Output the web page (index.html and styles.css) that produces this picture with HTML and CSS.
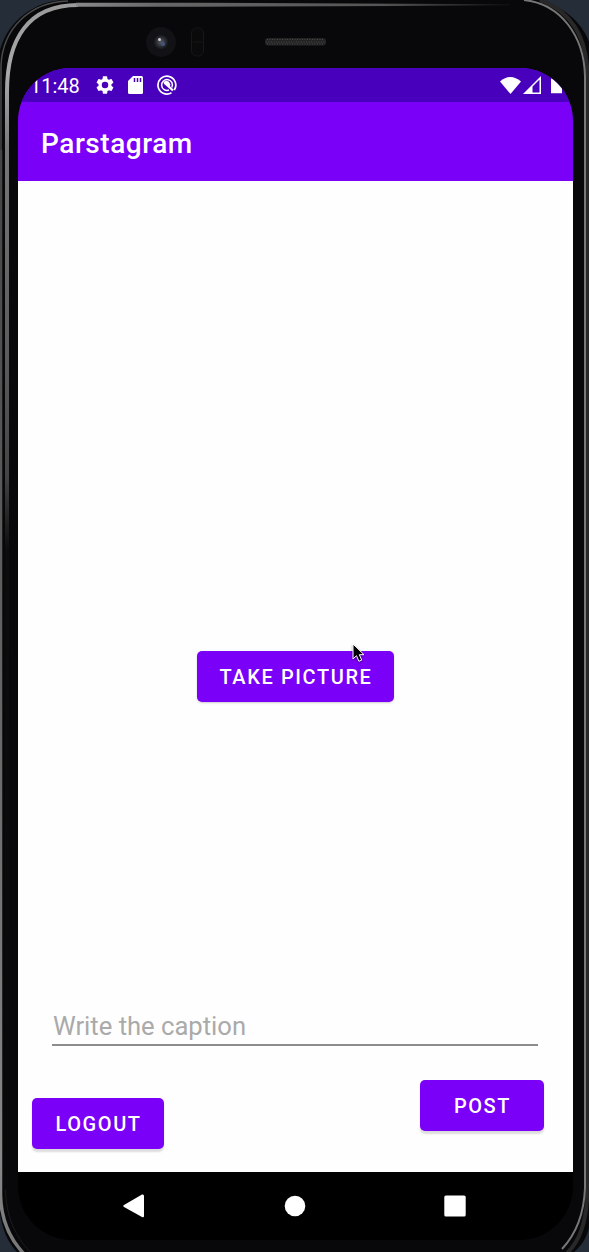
FILE: index.html
```html
<!DOCTYPE html>
<html lang="en">
<head>
<meta charset="utf-8">
<title>Parstagram</title>
<link rel="stylesheet" href="styles.css">
</head>
<body>
<div class="device">
  <svg class="frame" viewBox="0 0 589 1252" aria-hidden="true">
    <defs>
      <linearGradient id="side" x1="0" y1="0" x2="0" y2="1252" gradientUnits="userSpaceOnUse">
        <stop offset="0" stop-color="#999"/><stop offset=".06" stop-color="#aaa"/><stop offset=".12" stop-color="#777"/><stop offset=".3" stop-color="#585858"/><stop offset=".38" stop-color="#444"/><stop offset=".44" stop-color="#0c0c0c"/><stop offset="1" stop-color="#080808"/>
      </linearGradient>
      <linearGradient id="top" x1="76" y1="0" x2="510" y2="0" gradientUnits="userSpaceOnUse">
        <stop offset="0" stop-color="#888"/><stop offset=".2" stop-color="#666"/><stop offset=".7" stop-color="#555"/><stop offset="1" stop-color="#111"/>
      </linearGradient>
      <linearGradient id="edge" x1="0" y1="1252" x2="0" y2="150" gradientUnits="userSpaceOnUse">
        <stop offset="0" stop-color="#777"/><stop offset=".08" stop-color="#888"/><stop offset=".5" stop-color="#666"/><stop offset="1" stop-color="#444"/>
      </linearGradient>
      <radialGradient id="lens"><stop offset="0" stop-color="#555b68"/><stop offset=".5" stop-color="#282a30"/><stop offset=".75" stop-color="#111216"/><stop offset="1" stop-color="#121216"/></radialGradient>
    </defs>
    <path fill="#08080a" d="M0 50C8 20 36 0 66 0H538C562 5 582 22 589 42V1228C586 1240 580 1247 574 1252H17C8 1243 2 1229 0 1213Z"/>
    <path fill="none" stroke="#4a4a4a" stroke-width="1.500" d="M1 190V65C3 28 30 2 68 1"/>
    <path fill="none" stroke="url(#edge)" stroke-width="3.500" d="M.5 150V1195C1 1220 9 1238 24 1254"/>
    <path fill="none" stroke="#1c1c1c" d="M5.500 600V1190C6 1216 15 1236 30 1252"/>
    <path fill="none" stroke="url(#side)" stroke-width="4" d="M7 1190V92C7 39 28 5 78 5"/>
    <path fill="url(#top)" d="M76 2.800H200L510 4.200V5.200L400 6L200 6.800H76z"/>
    <path fill="none" stroke="#282828" stroke-width="4" d="M540 0C573 12 587 38 587.500 76V1190C587 1222 579 1242 567 1253"/>
    <path fill="none" stroke="#777" stroke-width="2" d="M524 0C561 4 584 36 585 76V1188C584 1214 577 1233 562 1249"/>
    <circle cx="161" cy="42" r="15" fill="#121216"/>
    <circle cx="161" cy="42" r="10" fill="url(#lens)"/>
    <circle cx="159.500" cy="39.500" r="1.500" fill="#ccc"/><circle cx="163" cy="44" r="2" fill="#47547c"/>
    <rect x="191.500" y="28" width="12" height="28" rx="5" fill="#0a0a0b" stroke="#171719"/><path d="M193 42h9" stroke="#171719"/>
    <rect x="265" y="38" width="61" height="7.500" rx="3" fill="#232324"/>
    <path d="M267 39.500h57M266 42h59M267 44h57" stroke="#4b4b4b" stroke-dasharray="1 1.500"/>
  </svg>
  <main class="screen">
    <header class="top">
      <div class="status">
        <span class="time">11:48</span>
        <svg class="gear" viewBox="2 2 20 20"><path fill="#fff" d="M19.140 12.940c.04-.3.060-.61.060-.94s-.02-.64-.07-.94l2.030-1.580c.18-.14.230-.41.120-.61l-1.920-3.320c-.12-.22-.37-.29-.59-.22l-2.390.96c-.5-.38-1.030-.7-1.620-.94l-.36-2.540c-.04-.24-.24-.41-.48-.41h-3.840c-.24 0-.43.170-.47.410l-.36 2.540c-.59.240-1.130.57-1.620.94l-2.390-.96c-.22-.08-.47 0-.59.220L2.740 8.870c-.12.210-.08.470.120.610l2.030 1.580c-.05.3-.09.630-.09.940s.02.640.070.940l-2.030 1.580c-.18.140-.23.410-.12.610l1.920 3.320c.12.220.37.290.59.220l2.390-.96c.5.380 1.030.7 1.620.94l.36 2.540c.05.240.24.410.48.410h3.840c.24 0 .44-.17.470-.41l.36-2.540c.59-.24 1.130-.56 1.620-.94l2.390.96c.22.080.47 0 .59-.22l1.920-3.320c.12-.22.070-.47-.12-.61zM12 15.600A3.600 3.600 0 1 1 12 8.400a3.600 3.600 0 0 1 0 7.200z"/></svg>
        <svg class="sd" viewBox="0 0 15 18"><path fill="#fff" d="M5 0h8.500Q15 0 15 1.500v15q0 1.500-1.500 1.500h-12Q0 18 0 16.500V5z"/><path stroke="#4900bd" stroke-width="1.500" d="M6.500 2v4M9.500 2v4M12.500 2v4"/></svg>
        <svg class="debug" viewBox="0 0 20 20"><g fill="none" stroke="#fff"><path stroke-width="1.700" d="M17.300 15A8.900 8.900 0 1 0 14.500 17.700"/><path stroke-width="1.500" d="M14.800 12.500A5.400 5.400 0 1 0 12 15"/><path stroke-width="2.300" d="m9 9 7 6.500"/></g><path fill="#fff" d="M6.500 7 9 5.500l3 1.300 1.500 3.200-2 2L7 9z"/></svg>
        <span class="space"></span>
        <svg class="wifi" viewBox="0 0 21 17"><path fill="#fff" d="M0 4.500Q10.500-4.500 21 4.500L10.500 17z"/></svg>
        <svg class="signal" viewBox="0 0 18 18"><path fill="#fff" fill-rule="evenodd" d="M0 18 18 0V18zM9.500 10.500V16.500H16.500V3.500z"/></svg>
        <svg class="battery" viewBox="0 0 12 18"><path fill="#fff" d="M0 2h3V0h6v2h3v16H0z"/></svg>
      </div>
      <div class="appbar"><h1>Parstagram</h1></div>
    </header>
    <section class="content">
      <button class="btn take">TAKE PICTURE</button>
      <input class="caption" placeholder="Write the caption" aria-label="Caption">
      <div class="actions"><button class="btn logout">LOGOUT</button><button class="btn post">POST</button></div>
    </section>
    <nav class="nav">
      <svg viewBox="0 0 22 24"><path fill="#fff" d="M1 11 19 .6Q21 0 21 2v20q0 2-2 1L1 13Q-.5 12 1 11z"/></svg>
      <svg viewBox="0 0 22 24"><circle cx="11" cy="12" r="10.300" fill="#fff"/></svg>
      <svg viewBox="0 0 22 24"><rect x=".3" y="1.500" width="21.400" height="21" rx="1.500" fill="#fff"/></svg>
    </nav>
  </main>
  <svg class="cursor" viewBox="0 0 14 20"><path fill="#000" stroke="#fff" stroke-width="1" d="M1 1v15l3.500-3.300 2.400 5.600 2.800-1.200-2.400-5.400H12z"/></svg>
</div>
</body>
</html>
```

FILE: styles.css
```css
* { box-sizing: border-box; }
body { margin: 0; font-family: Roboto, sans-serif; }
.device { position: relative; width: 589px; height: 1252px; padding: 68px 16px 0 18px; overflow: hidden; background: #252e38; }
.frame { position: absolute; inset: 0; width: 589px; height: 1252px; }
.screen { position: relative; display: flex; flex-direction: column; width: 555px; height: 1172px; }
.screen > * { flex: none; }
.top { height: 113px; border-radius: 53px 53px 0 0; overflow: hidden; background: #7b00f7; }
.status { display: flex; align-items: center; height: 34px; padding-left: 12px; background: #4900bd; color: #fff; }
.time { width: 49px; font-size: 20px; line-height: 34px; padding-top: 1px; }
.status svg { flex: none; }
.gear { width: 18px; height: 18px; margin-left: 17px; }
.sd { width: 15px; height: 18px; margin-left: 14px; }
.debug { width: 20px; height: 20px; margin-left: 14px; }
.space { flex: 1; }
.wifi { width: 21px; height: 17px; margin-right: 2px; }
.signal { width: 18px; height: 18px; margin-right: 10px; }
.battery { width: 11px; height: 18px; margin-right: 11px; }
.appbar { display: flex; align-items: center; height: 79px; padding: 4px 0 0 23px; }
h1 { margin: 0; color: #fff; font-size: 28px; font-weight: 500; letter-spacing: .55px; line-height: 34px; }
.content { display: flex; flex-direction: column; height: 991px; background: #fefefe; }
.btn { border: 0; padding: 1px 0 0 1px; height: 51px; border-radius: 5px; background: #7b00f7; color: #fff; font: 500 20px/24px Roboto, sans-serif; letter-spacing: 1.6px; box-shadow: 0 1px 2px #0003; }
.take { width: 197px; margin: 470px auto 0 179px; }
.caption { width: 486px; height: 46px; margin: 298px 0 0 34px; padding: 8px 0 0 1px; border: 0; border-bottom: 2px solid #8c8c8c; outline: 0; background: none; font: 25.6px Roboto, sans-serif; }
.caption::placeholder { color: #aaa; opacity: 1; }
.actions { display: flex; justify-content: space-between; align-items: flex-start; padding: 34px 29px 0 14px; }
.logout { width: 132px; margin-top: 18px; }
.post { width: 124px; }
.logout, .post { box-shadow: 0 3px 2px #0002; }
.nav { display: flex; justify-content: space-between; height: 68px; padding: 22px 107px 0 105px; background: #000; border-radius: 0 0 54px 54px; }
.nav svg { width: 22px; height: 24px; }
.cursor { position: absolute; left: 352px; top: 643px; width: 14px; height: 20px; filter: drop-shadow(0 1px 1px #0006); }
```
